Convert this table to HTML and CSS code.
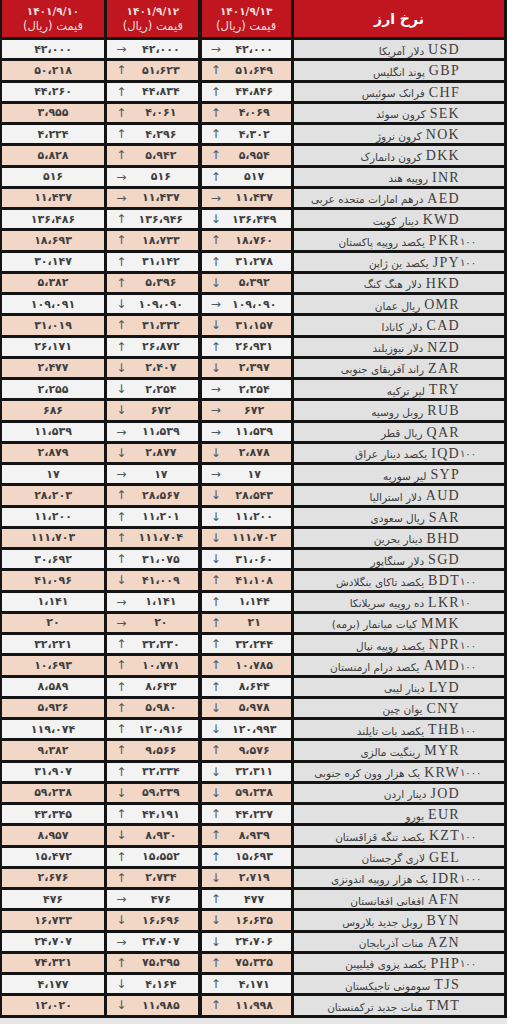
FILE: index.html
```html
<!DOCTYPE html>
<html lang="fa">
<head>
<meta charset="utf-8">
<link rel="stylesheet" href="styles.css">
</head>
<body>
<div class="table" dir="rtl">
  <div class="row head">
    <div class="h h-cur">نرخ ارز</div>
    <div class="h"><span class="d">۱۴۰۱/۹/۱۳</span><span>قیمت (ریال)</span></div>
    <div class="h"><span class="d">۱۴۰۱/۹/۱۲</span><span>قیمت (ریال)</span></div>
    <div class="h"><span class="d">۱۴۰۱/۹/۱۰</span><span>قیمت (ریال)</span></div>
  </div>

  <div class="row"><div class="cur"><span class="nm">دلار آمریکا</span><span class="code">USD</span><span class="mul"></span></div><div class="v"><span class="ar">→</span><span class="n">۴۲،۰۰۰</span></div><div class="v"><span class="ar">→</span><span class="n">۴۲،۰۰۰</span></div><div class="v o">۴۲،۰۰۰</div></div>
  <div class="row"><div class="cur"><span class="nm">پوند انگلیس</span><span class="code">GBP</span><span class="mul"></span></div><div class="v"><span class="ar">↑</span><span class="n">۵۱،۶۴۹</span></div><div class="v"><span class="ar">↑</span><span class="n">۵۱،۶۲۳</span></div><div class="v o">۵۰،۲۱۸</div></div>
  <div class="row"><div class="cur"><span class="nm">فرانک سوئیس</span><span class="code">CHF</span><span class="mul"></span></div><div class="v"><span class="ar">↑</span><span class="n">۴۴،۸۴۶</span></div><div class="v"><span class="ar">↑</span><span class="n">۴۴،۸۳۴</span></div><div class="v o">۴۴،۲۶۰</div></div>
  <div class="row"><div class="cur"><span class="nm">کرون سوئد</span><span class="code">SEK</span><span class="mul"></span></div><div class="v"><span class="ar">↑</span><span class="n">۴،۰۶۹</span></div><div class="v"><span class="ar">↑</span><span class="n">۴،۰۶۱</span></div><div class="v o">۳،۹۵۵</div></div>
  <div class="row"><div class="cur"><span class="nm">کرون نروژ</span><span class="code">NOK</span><span class="mul"></span></div><div class="v"><span class="ar">↑</span><span class="n">۴،۳۰۲</span></div><div class="v"><span class="ar">↑</span><span class="n">۴،۲۹۶</span></div><div class="v o">۴،۲۲۴</div></div>
  <div class="row"><div class="cur"><span class="nm">کرون دانمارک</span><span class="code">DKK</span><span class="mul"></span></div><div class="v"><span class="ar">↑</span><span class="n">۵،۹۵۴</span></div><div class="v"><span class="ar">↑</span><span class="n">۵،۹۴۲</span></div><div class="v o">۵،۸۲۸</div></div>
  <div class="row"><div class="cur"><span class="nm">روپیه هند</span><span class="code">INR</span><span class="mul"></span></div><div class="v"><span class="ar">↑</span><span class="n">۵۱۷</span></div><div class="v"><span class="ar">→</span><span class="n">۵۱۶</span></div><div class="v o">۵۱۶</div></div>
  <div class="row"><div class="cur"><span class="nm">درهم امارات متحده عربی</span><span class="code">AED</span><span class="mul"></span></div><div class="v"><span class="ar">→</span><span class="n">۱۱،۴۳۷</span></div><div class="v"><span class="ar">→</span><span class="n">۱۱،۴۳۷</span></div><div class="v o">۱۱،۴۳۷</div></div>
  <div class="row"><div class="cur"><span class="nm">دینار کویت</span><span class="code">KWD</span><span class="mul"></span></div><div class="v"><span class="ar">↓</span><span class="n">۱۳۶،۴۴۹</span></div><div class="v"><span class="ar">↑</span><span class="n">۱۳۶،۹۴۶</span></div><div class="v o">۱۳۶،۴۸۶</div></div>
  <div class="row"><div class="cur"><span class="nm">یکصد روپیه پاکستان</span><span class="code">PKR</span><span class="mul">۱۰۰</span></div><div class="v"><span class="ar">↑</span><span class="n">۱۸،۷۶۰</span></div><div class="v"><span class="ar">↑</span><span class="n">۱۸،۷۳۳</span></div><div class="v o">۱۸،۶۹۳</div></div>
  <div class="row"><div class="cur"><span class="nm">یکصد ین ژاپن</span><span class="code">JPY</span><span class="mul">۱۰۰</span></div><div class="v"><span class="ar">↑</span><span class="n">۳۱،۲۷۸</span></div><div class="v"><span class="ar">↑</span><span class="n">۳۱،۱۴۲</span></div><div class="v o">۳۰،۱۴۷</div></div>
  <div class="row"><div class="cur"><span class="nm">دلار هنگ کنگ</span><span class="code">HKD</span><span class="mul"></span></div><div class="v"><span class="ar">↓</span><span class="n">۵،۳۹۲</span></div><div class="v"><span class="ar">↑</span><span class="n">۵،۳۹۶</span></div><div class="v o">۵،۳۸۲</div></div>
  <div class="row"><div class="cur"><span class="nm">ریال عمان</span><span class="code">OMR</span><span class="mul"></span></div><div class="v"><span class="ar">→</span><span class="n">۱۰۹،۰۹۰</span></div><div class="v"><span class="ar">↓</span><span class="n">۱۰۹،۰۹۰</span></div><div class="v o">۱۰۹،۰۹۱</div></div>
  <div class="row"><div class="cur"><span class="nm">دلار کانادا</span><span class="code">CAD</span><span class="mul"></span></div><div class="v"><span class="ar">↓</span><span class="n">۳۱،۱۵۷</span></div><div class="v"><span class="ar">↑</span><span class="n">۳۱،۳۳۲</span></div><div class="v o">۳۱،۰۱۹</div></div>
  <div class="row"><div class="cur"><span class="nm">دلار نیوزیلند</span><span class="code">NZD</span><span class="mul"></span></div><div class="v"><span class="ar">↑</span><span class="n">۲۶،۹۳۱</span></div><div class="v"><span class="ar">↑</span><span class="n">۲۶،۸۷۲</span></div><div class="v o">۲۶،۱۷۱</div></div>
  <div class="row"><div class="cur"><span class="nm">راند آفریقای جنوبی</span><span class="code">ZAR</span><span class="mul"></span></div><div class="v"><span class="ar">↓</span><span class="n">۲،۳۹۷</span></div><div class="v"><span class="ar">↓</span><span class="n">۲،۴۰۷</span></div><div class="v o">۲،۴۷۷</div></div>
  <div class="row"><div class="cur"><span class="nm">لیر ترکیه</span><span class="code">TRY</span><span class="mul"></span></div><div class="v"><span class="ar">→</span><span class="n">۲،۲۵۴</span></div><div class="v"><span class="ar">↓</span><span class="n">۲،۲۵۴</span></div><div class="v o">۲،۲۵۵</div></div>
  <div class="row"><div class="cur"><span class="nm">روبل روسیه</span><span class="code">RUB</span><span class="mul"></span></div><div class="v"><span class="ar">→</span><span class="n">۶۷۲</span></div><div class="v"><span class="ar">↓</span><span class="n">۶۷۲</span></div><div class="v o">۶۸۶</div></div>
  <div class="row"><div class="cur"><span class="nm">ریال قطر</span><span class="code">QAR</span><span class="mul"></span></div><div class="v"><span class="ar">→</span><span class="n">۱۱،۵۳۹</span></div><div class="v"><span class="ar">→</span><span class="n">۱۱،۵۳۹</span></div><div class="v o">۱۱،۵۳۹</div></div>
  <div class="row"><div class="cur"><span class="nm">یکصد دینار عراق</span><span class="code">IQD</span><span class="mul">۱۰۰</span></div><div class="v"><span class="ar">↓</span><span class="n">۲،۸۷۸</span></div><div class="v"><span class="ar">↓</span><span class="n">۲،۸۷۷</span></div><div class="v o">۲،۸۷۹</div></div>
  <div class="row"><div class="cur"><span class="nm">لیر سوریه</span><span class="code">SYP</span><span class="mul"></span></div><div class="v"><span class="ar">→</span><span class="n">۱۷</span></div><div class="v"><span class="ar">→</span><span class="n">۱۷</span></div><div class="v o">۱۷</div></div>
  <div class="row"><div class="cur"><span class="nm">دلار استرالیا</span><span class="code">AUD</span><span class="mul"></span></div><div class="v"><span class="ar">↓</span><span class="n">۲۸،۵۴۳</span></div><div class="v"><span class="ar">↑</span><span class="n">۲۸،۵۶۷</span></div><div class="v o">۲۸،۲۰۳</div></div>
  <div class="row"><div class="cur"><span class="nm">ریال سعودی</span><span class="code">SAR</span><span class="mul"></span></div><div class="v"><span class="ar">↓</span><span class="n">۱۱،۲۰۰</span></div><div class="v"><span class="ar">↑</span><span class="n">۱۱،۲۰۱</span></div><div class="v o">۱۱،۲۰۰</div></div>
  <div class="row"><div class="cur"><span class="nm">دینار بحرین</span><span class="code">BHD</span><span class="mul"></span></div><div class="v"><span class="ar">↓</span><span class="n">۱۱۱،۷۰۲</span></div><div class="v"><span class="ar">↑</span><span class="n">۱۱۱،۷۰۴</span></div><div class="v o">۱۱۱،۷۰۳</div></div>
  <div class="row"><div class="cur"><span class="nm">دلار سنگاپور</span><span class="code">SGD</span><span class="mul"></span></div><div class="v"><span class="ar">↓</span><span class="n">۳۱،۰۶۰</span></div><div class="v"><span class="ar">↑</span><span class="n">۳۱،۰۷۵</span></div><div class="v o">۳۰،۶۹۲</div></div>
  <div class="row"><div class="cur"><span class="nm">یکصد تاکای بنگلادش</span><span class="code">BDT</span><span class="mul">۱۰۰</span></div><div class="v"><span class="ar">↑</span><span class="n">۴۱،۱۰۸</span></div><div class="v"><span class="ar">↓</span><span class="n">۴۱،۰۰۹</span></div><div class="v o">۴۱،۰۹۶</div></div>
  <div class="row"><div class="cur"><span class="nm">ده روپیه سریلانکا</span><span class="code">LKR</span><span class="mul">۱۰</span></div><div class="v"><span class="ar">↑</span><span class="n">۱،۱۴۴</span></div><div class="v"><span class="ar">→</span><span class="n">۱،۱۴۱</span></div><div class="v o">۱،۱۴۱</div></div>
  <div class="row"><div class="cur"><span class="nm">کیات میانمار (برمه)</span><span class="code">MMK</span><span class="mul"></span></div><div class="v"><span class="ar">↑</span><span class="n">۲۱</span></div><div class="v"><span class="ar">→</span><span class="n">۲۰</span></div><div class="v o">۲۰</div></div>
  <div class="row"><div class="cur"><span class="nm">یکصد روپیه نپال</span><span class="code">NPR</span><span class="mul">۱۰۰</span></div><div class="v"><span class="ar">↑</span><span class="n">۳۲،۲۴۴</span></div><div class="v"><span class="ar">↑</span><span class="n">۳۲،۲۳۰</span></div><div class="v o">۳۲،۲۲۱</div></div>
  <div class="row"><div class="cur"><span class="nm">یکصد درام ارمنستان</span><span class="code">AMD</span><span class="mul">۱۰۰</span></div><div class="v"><span class="ar">↑</span><span class="n">۱۰،۷۸۵</span></div><div class="v"><span class="ar">↑</span><span class="n">۱۰،۷۷۱</span></div><div class="v o">۱۰،۶۹۳</div></div>
  <div class="row"><div class="cur"><span class="nm">دینار لیبی</span><span class="code">LYD</span><span class="mul"></span></div><div class="v"><span class="ar">↑</span><span class="n">۸،۶۴۴</span></div><div class="v"><span class="ar">↑</span><span class="n">۸،۶۴۳</span></div><div class="v o">۸،۵۸۹</div></div>
  <div class="row"><div class="cur"><span class="nm">یوان چین</span><span class="code">CNY</span><span class="mul"></span></div><div class="v"><span class="ar">↓</span><span class="n">۵،۹۷۸</span></div><div class="v"><span class="ar">↑</span><span class="n">۵،۹۸۰</span></div><div class="v o">۵،۹۲۶</div></div>
  <div class="row"><div class="cur"><span class="nm">یکصد بات تایلند</span><span class="code">THB</span><span class="mul">۱۰۰</span></div><div class="v"><span class="ar">↓</span><span class="n">۱۲۰،۹۹۳</span></div><div class="v"><span class="ar">↑</span><span class="n">۱۲۰،۹۱۶</span></div><div class="v o">۱۱۹،۰۷۴</div></div>
  <div class="row"><div class="cur"><span class="nm">رینگیت مالزی</span><span class="code">MYR</span><span class="mul"></span></div><div class="v"><span class="ar">↑</span><span class="n">۹،۵۷۶</span></div><div class="v"><span class="ar">↑</span><span class="n">۹،۵۶۶</span></div><div class="v o">۹،۳۸۲</div></div>
  <div class="row"><div class="cur"><span class="nm">یک هزار وون کره جنوبی</span><span class="code">KRW</span><span class="mul">۱۰۰۰</span></div><div class="v"><span class="ar">↓</span><span class="n">۳۲،۳۱۱</span></div><div class="v"><span class="ar">↑</span><span class="n">۳۲،۳۳۴</span></div><div class="v o">۳۱،۹۰۷</div></div>
  <div class="row"><div class="cur"><span class="nm">دینار اردن</span><span class="code">JOD</span><span class="mul"></span></div><div class="v"><span class="ar">↓</span><span class="n">۵۹،۲۳۸</span></div><div class="v"><span class="ar">↓</span><span class="n">۵۹،۲۳۹</span></div><div class="v o">۵۹،۲۳۸</div></div>
  <div class="row"><div class="cur"><span class="nm">یورو</span><span class="code">EUR</span><span class="mul"></span></div><div class="v"><span class="ar">↑</span><span class="n">۴۴،۲۲۷</span></div><div class="v"><span class="ar">↑</span><span class="n">۴۴،۱۹۱</span></div><div class="v o">۴۳،۳۴۵</div></div>
  <div class="row"><div class="cur"><span class="nm">یکصد تنگه قزاقستان</span><span class="code">KZT</span><span class="mul">۱۰۰</span></div><div class="v"><span class="ar">↑</span><span class="n">۸،۹۳۹</span></div><div class="v"><span class="ar">↓</span><span class="n">۸،۹۳۰</span></div><div class="v o">۸،۹۵۷</div></div>
  <div class="row"><div class="cur"><span class="nm">لاری گرجستان</span><span class="code">GEL</span><span class="mul"></span></div><div class="v"><span class="ar">↑</span><span class="n">۱۵،۶۹۳</span></div><div class="v"><span class="ar">↑</span><span class="n">۱۵،۵۵۲</span></div><div class="v o">۱۵،۴۷۲</div></div>
  <div class="row"><div class="cur"><span class="nm">یک هزار روپیه اندونزی</span><span class="code">IDR</span><span class="mul">۱۰۰۰</span></div><div class="v"><span class="ar">↓</span><span class="n">۲،۷۱۹</span></div><div class="v"><span class="ar">↑</span><span class="n">۲،۷۳۴</span></div><div class="v o">۲،۶۷۶</div></div>
  <div class="row"><div class="cur"><span class="nm">افغانی افغانستان</span><span class="code">AFN</span><span class="mul"></span></div><div class="v"><span class="ar">↑</span><span class="n">۴۷۷</span></div><div class="v"><span class="ar">→</span><span class="n">۴۷۶</span></div><div class="v o">۴۷۶</div></div>
  <div class="row"><div class="cur"><span class="nm">روبل جدید بلاروس</span><span class="code">BYN</span><span class="mul"></span></div><div class="v"><span class="ar">↓</span><span class="n">۱۶،۶۳۵</span></div><div class="v"><span class="ar">↓</span><span class="n">۱۶،۶۹۶</span></div><div class="v o">۱۶،۷۳۳</div></div>
  <div class="row"><div class="cur"><span class="nm">منات آذربایجان</span><span class="code">AZN</span><span class="mul"></span></div><div class="v"><span class="ar">↓</span><span class="n">۲۴،۷۰۶</span></div><div class="v"><span class="ar">→</span><span class="n">۲۴،۷۰۷</span></div><div class="v o">۲۴،۷۰۷</div></div>
  <div class="row"><div class="cur"><span class="nm">یکصد پزوی فیلیپین</span><span class="code">PHP</span><span class="mul">۱۰۰</span></div><div class="v"><span class="ar">↑</span><span class="n">۷۵،۳۲۵</span></div><div class="v"><span class="ar">↑</span><span class="n">۷۵،۲۹۵</span></div><div class="v o">۷۴،۳۲۱</div></div>
  <div class="row"><div class="cur"><span class="nm">سومونی تاجیکستان</span><span class="code">TJS</span><span class="mul"></span></div><div class="v"><span class="ar">↑</span><span class="n">۴،۱۷۱</span></div><div class="v"><span class="ar">↓</span><span class="n">۴،۱۶۴</span></div><div class="v o">۴،۱۷۷</div></div>
  <div class="row"><div class="cur"><span class="nm">منات جدید ترکمنستان</span><span class="code">TMT</span><span class="mul"></span></div><div class="v"><span class="ar">↑</span><span class="n">۱۱،۹۹۸</span></div><div class="v"><span class="ar">↓</span><span class="n">۱۱،۹۸۵</span></div><div class="v o">۱۲،۰۲۰</div></div>
</div>
</body>
</html>
```

FILE: styles.css
```css
html, body {
  margin: 0;
  padding: 0;
}

body {
  background: #e6e6e6;
  width: 507px;
  font-family: "DejaVu Sans", sans-serif;
}

.table {
  background: #141414;
  padding: 0 3px 3px 2px;
  display: flex;
  flex-direction: column;
  gap: 3px;
}

.row {
  display: grid;
  grid-template-columns: 210px 89px 91px 102px;
  column-gap: 3.33px;
  height: 18.26px;
}

.row.head {
  height: 37px;
}

.h {
  background: #c0161f;
  color: #f6dede;
  display: flex;
  flex-direction: column;
  align-items: center;
  justify-content: center;
  font-size: 11.5px;
  line-height: 15px;
  padding-top: 1px;
}

.h .d {
  direction: ltr;
  font-size: 10.5px;
  font-weight: bold;
}

.h-cur {
  color: #ffffff;
  font-size: 14px;
  font-weight: bold;
}

.cur {
  background: #e1e1e1;
  direction: ltr;
  display: flex;
  justify-content: flex-end;
  align-items: center;
  color: #3c3c3c;
}

.nm {
  direction: rtl;
  font-size: 10.5px;
  margin-right: 4px;
  padding-top: 3px;
}

.code {
  font-family: "Liberation Serif", serif;
  font-size: 14px;
  letter-spacing: 1.3px;
  padding-top: 2px;
}

.mul {
  width: 44px;
  font-size: 10px;
  padding-top: 2px;
  letter-spacing: 0.5px;
}

.v {
  background: #f3f3f3;
  direction: ltr;
  display: flex;
  align-items: center;
  color: #3f3f3f;
  font-size: 11px;
  font-weight: bold;
}

.row:nth-child(odd) .v {
  background: #f2d6c6;
}

.ar {
  width: 28px;
  text-align: center;
  font-size: 12px;
  font-weight: normal;
  color: #555;
}

.n {
  flex: 1;
  text-align: center;
  padding-right: 12px;
}

.v.o {
  justify-content: center;
}
```
